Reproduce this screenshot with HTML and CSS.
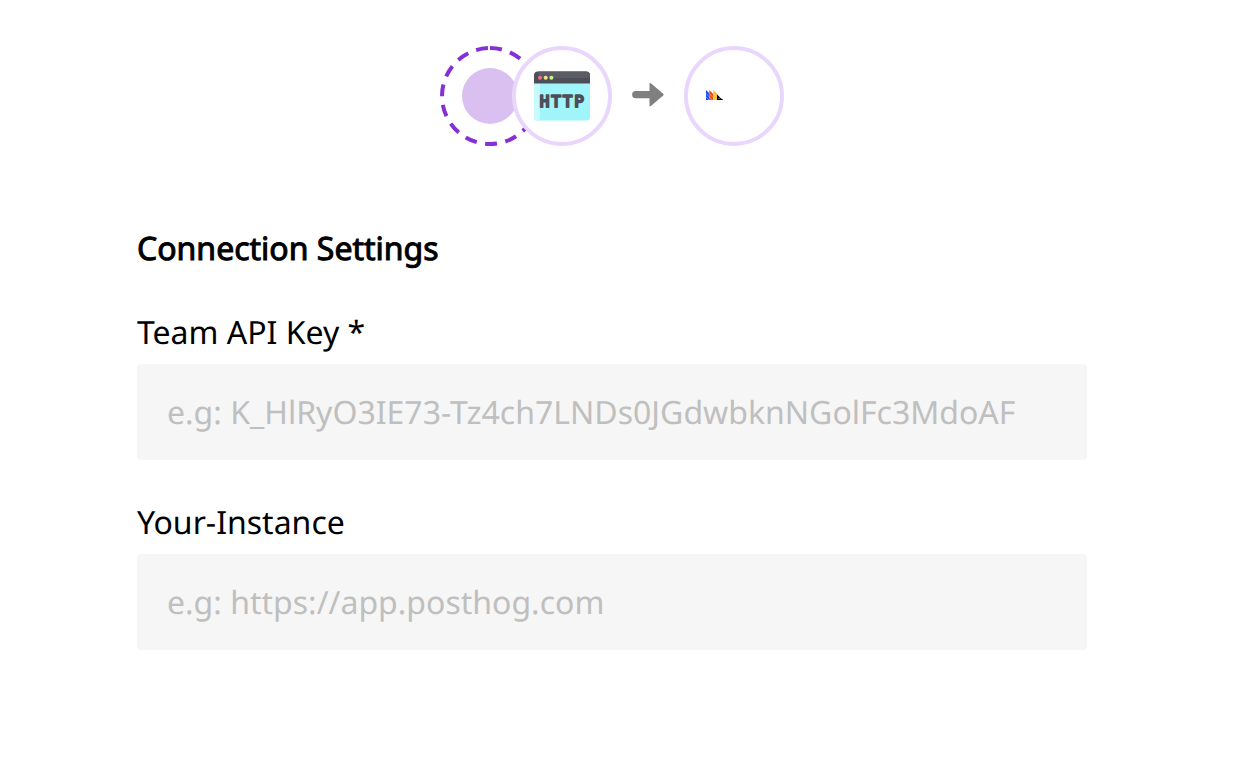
FILE: index.html
```html
<!DOCTYPE html>
<html lang="en">
<head>
<meta charset="utf-8">
<meta name="viewport" content="width=device-width, initial-scale=1">
<title>Connection Settings</title>
<link rel="stylesheet" href="styles.css">
</head>
<body>
<main class="page">
  <div class="flow">
    <svg class="node" viewBox="0 0 100 100" aria-hidden="true">
      <circle cx="50" cy="50" r="28" fill="#d9c0f0"/>
      <circle cx="50" cy="50" r="48" fill="none" stroke="#8430d6" stroke-width="4" stroke-dasharray="12 8.5" transform="rotate(-90 50 50)"/>
    </svg>
    <div class="node node-solid node-overlap">
      <svg class="node-icon" viewBox="0 0 56 56" role="img" aria-label="HTTP">
        <path d="M0 14h56v35a3.500 3.500 0 0 1-3.500 3.500h-49A3.500 3.500 0 0 1 0 49z" fill="#a0f5fb"/>
        <path d="M0 14h6v35q0 3.500-2.500 3.500A3.500 3.500 0 0 1 0 49z" fill="#c8fafe"/>
        <path d="M0 15.500V7.500A4 4 0 0 1 4 3.500h48a4 4 0 0 1 4 4V15.500z" fill="#4e4e59"/>
        <path d="M4 3.500h48a4 4 0 0 1 4 4q0 2.500-3 2.500H9Q4 10 4 3.500z" fill="#5b5b66"/>
        <circle cx="6" cy="9.700" r="2" fill="#f0707c"/>
        <circle cx="11.700" cy="9.700" r="2" fill="#fbe08e"/>
        <circle cx="17.400" cy="9.700" r="2" fill="#c7f097"/>
        <text class="http-text" x="10.500 22 33.500 45" y="38.500" text-anchor="middle">HTTP</text>
      </svg>
    </div>
    <svg class="arrow" viewBox="0 0 32 26" aria-hidden="true">
      <path d="M3.700 8.100H17.500V1.300Q17.500-.8 19.200.6L31.200 10.700Q32.200 11.600 31.200 12.500L19.200 22.700Q17.500 24 17.500 22V15.200H3.700A3.550 3.550 0 0 1 3.700 8.100z" fill="#808080"/>
    </svg>
    <div class="node node-solid">
      <svg class="node-icon" viewBox="0 0 56 56" role="img" aria-label="PostHog">
        <path d="M0 22l3.500 3.500V32H0z" fill="#1d4aff"/>
        <path d="M3.300 22l4 4V32h-4z" fill="#f54e00"/>
        <path d="M7.300 22l4 4V32h-4z" fill="#f9bd2b"/>
        <path d="M0 25.500L3.300 29M0 29l3 3M3.300 25.500l4 4M3.300 29l3 3M7.300 25.500l4 4M7.300 29l3 3" fill="none" stroke="#fff" stroke-width=".6" opacity=".6"/>
        <path d="M11 26.300l3.500 3.700q.8.800 2.200 1v1H11z" fill="#000"/>
        <circle cx="13" cy="30.300" r=".5" fill="#fff"/>
      </svg>
    </div>
  </div>
  <form class="settings">
    <h1 class="title">Connection Settings</h1>
    <div class="field">
      <label class="label" for="api-key">Team API Key *</label>
      <input class="input" id="api-key" type="text" required placeholder="e.g: K_HlRyO3IE73-Tz4ch7LNDs0JGdwbknNGolFc3MdoAF">
    </div>
    <div class="field">
      <label class="label" for="instance">Your-Instance</label>
      <input class="input" id="instance" type="text" placeholder="e.g: https://app.posthog.com">
    </div>
  </form>
</main>
</body>
</html>
```
FILE: styles.css
```css
* {
  box-sizing: border-box;
}

body {
  margin: 0;
  padding-right: 12px;
  background: #fff;
  color: #000;
  font: 32px/44px "Noto Sans", sans-serif;
  text-rendering: geometricPrecision;
}

.page {
  max-width: 950px;
  margin: 0 auto;
  padding: 46px 0;
}

.flow {
  display: flex;
  align-items: center;
  justify-content: center;
  margin-bottom: 81px;
}

.node {
  flex: none;
  width: 100px;
  height: 100px;
}

.node-solid {
  display: grid;
  place-items: center;
  border: 4px solid #ead6fc;
  border-radius: 50%;
  background: #fff;
}

.node-overlap {
  margin-left: -28px;
}

.node-icon {
  width: 56px;
  height: 56px;
}

.http-text {
  fill: #4e4e59;
  stroke: #4e4e59;
  stroke-width: 2px;
  stroke-linejoin: round;
  font: 16px "DejaVu Sans Mono", monospace;
}

.arrow {
  width: 32px;
  height: 26px;
  margin: 0 20px;
}

.title {
  margin: 0 0 40px;
  font-size: 32px;
  font-weight: 400;
  -webkit-text-stroke: 1px #000;
}

.field {
  margin-bottom: 41px;
}

.label {
  display: block;
  margin-bottom: 9px;
}

.input {
  display: block;
  width: 100%;
  height: 96px;
  padding: 0 30px;
  border: 0;
  border-radius: 4px;
  background: #f6f6f6;
  color: #000;
  font: inherit;
  text-rendering: inherit;
}

.input::placeholder {
  color: #bfbfbf;
}
```
